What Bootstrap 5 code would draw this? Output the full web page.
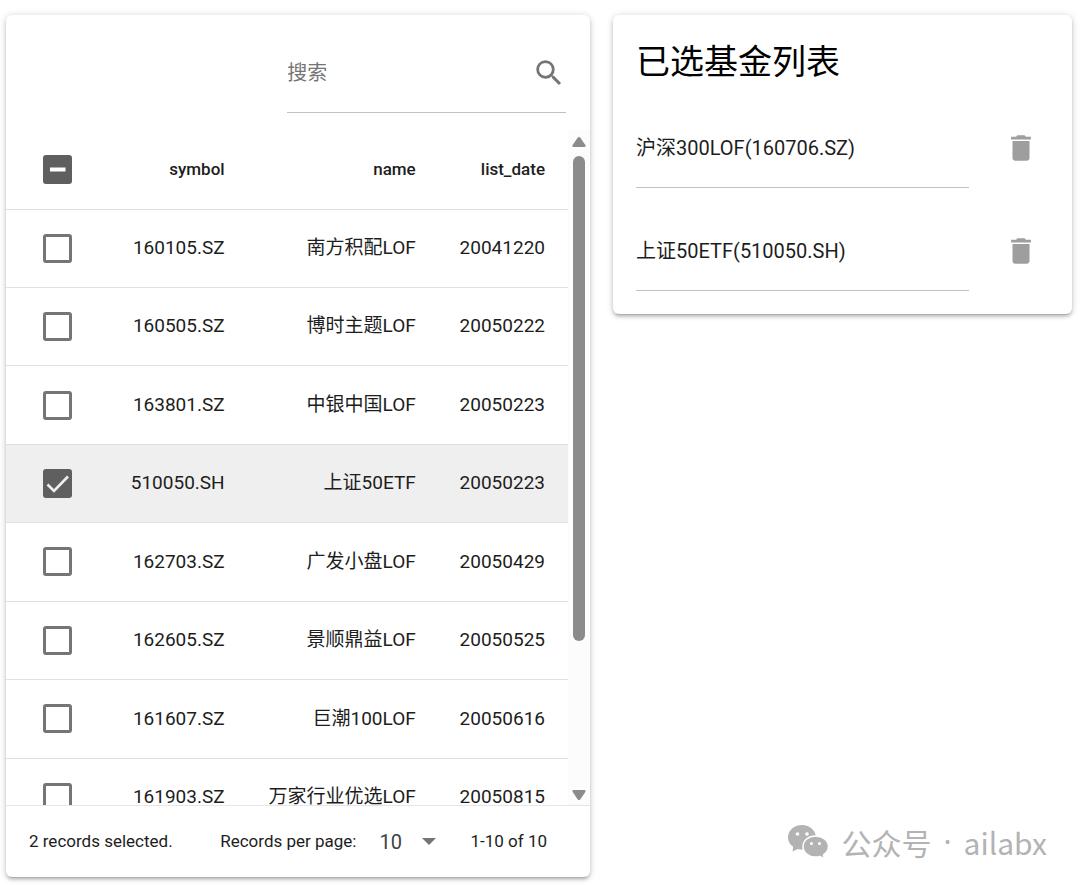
<!DOCTYPE html>
<html lang="zh-CN">
<head>
<meta charset="utf-8">
<meta name="viewport" content="width=device-width, initial-scale=1">
<title>已选基金列表</title>
<link href="https://cdn.jsdelivr.net/npm/bootstrap@5.3.0/dist/css/bootstrap.min.css" rel="stylesheet">
<style>
  body { font-family: Roboto, "Noto Sans CJK SC", sans-serif; color: #1d1d1d; background: #fff; font-size: 17px; }
  .page-grid { display: grid; grid-template-columns: 584fr 459fr; gap: 23px; padding: 15px 8px 8px 6px; }
  .panel { border: 0; border-radius: 6px; box-shadow: 0 1px 7px rgba(0,0,0,.2), 0 3px 3px rgba(0,0,0,.14), 0 4px 1px -3px rgba(0,0,0,.12); }
  .line-field { height: 80px; border-bottom: 1px solid #c2c2c2; }
  .line-field input { font-size: 20px; color: #1d1d1d; line-height: 30px; }
  .line-field input::placeholder { color: #757575; opacity: 1; }
  .search-row { padding: 18px 24px 17px; }
  .search-box { width: 52%; }
  .search-box svg, .trash-btn svg { width: 34px; height: 34px; fill: #757575; }
  .table-view { height: 675px; }
  .fund-table { height: 707px; table-layout: fixed; font-size: 19px; --bs-table-color: #1d1d1d; --bs-table-bg: transparent; }
  .fund-table > * > tr > * { padding: 0 23px 0 0; border-bottom: 1px solid #e0e0e0; text-align: right; vertical-align: middle; white-space: nowrap; }
  .fund-table th { height: 79px; font-size: 17px; font-weight: 500; }
  .fund-table > * > tr > :first-child { padding-left: 37px; text-align: left; }
  .fund-table tr.picked > * { background: #efefef; }
  .col-pick { width: 18%; } .col-symbol { width: 25%; } .col-name { width: 34%; } .col-date { width: 23%; }
  .fund-table .form-check-input { width: 29px; height: 29px; margin: 0; border: 3px solid #757575; border-radius: 3px; display: block; background-color: #fff; }
  .fund-table .form-check-input:checked, .fund-table .form-check-input:indeterminate { background-color: #5f5f5f; border-color: #5f5f5f; background-origin: border-box; background-size: 100% 100%; }
  .fund-table .form-check-input:checked { --bs-form-check-bg-image: url("data:image/svg+xml,%3csvg xmlns='http://www.w3.org/2000/svg' viewBox='0 0 29 29'%3e%3cpath fill='none' stroke='%23efefef' stroke-width='2.6' d='M4.5 15.5L11 22L25 7.5'/%3e%3c/svg%3e"); }
  .fund-table .form-check-input:indeterminate { --bs-form-check-bg-image: url("data:image/svg+xml,%3csvg xmlns='http://www.w3.org/2000/svg' viewBox='0 0 29 29'%3e%3cpath fill='%23fff' d='M7 12.5h15.500v4H7z'/%3e%3c/svg%3e"); }
  .track { width: 22px; background: #fcfcfc; padding: 6px 0 4px; }
  .track svg { width: 14px; height: 12px; fill: #8b8b8b; }
  .thumb { width: 12px; height: 73%; margin-top: 8px; border-radius: 6px; background: #8b8b8b; }
  .table-foot { height: 72px; padding: 0 43px 0 23px; border-top: 1px solid #e6e6e6; color: #1d1d1d; }
  .paging { gap: 34px; }
  .per-page { appearance: none; border: 0; background: transparent; font-size: 20px; color: #424242; width: 57px; padding: 0; }
  .per-page-box svg { width: 14px; height: 7px; fill: #757575; right: 0; pointer-events: none; }
  .picked-panel { padding: 23px; }
  .picked-panel h1 { font-size: 34px; line-height: 48px; font-weight: 400; color: #000; margin-bottom: 22px; }
  .stack-gap { gap: 23px; }
  .trash-btn { width: 57px; padding: 0; border: 0; }
  .trash-btn svg { fill: #9e9e9e; }
  .brand { font: 400 30px/44px "Noto Sans CJK SC", sans-serif; color: #b3b3b3; padding: 0 25px 13px 0; gap: 12px; }
  .brand svg { width: 42px; height: 36px; }
  .brand-dot { font-family: "Noto Sans", sans-serif; }
</style>
</head>
<body>
<main class="page-grid">
  <section class="card panel">
    <div class="search-row d-flex justify-content-end">
      <div class="search-box line-field d-flex align-items-center">
        <input type="search" id="q" class="form-control-plaintext flex-fill p-0" placeholder="搜索" aria-label="搜索">
        <label for="q" class="d-flex"><svg viewBox="0 0 24 24" aria-hidden="true"><path d="M15.500 14h-.79l-.28-.27A6.471 6.471 0 0 0 16 9.500 6.500 6.500 0 1 0 9.500 16c1.610 0 3.090-.59 4.230-1.570l.27.28v.79l5 4.990L20.490 19l-4.990-5zm-6 0C7.010 14 5 11.990 5 9.500S7.010 5 9.500 5 14 7.010 14 9.500 11.990 14 9.500 14z"/></svg></label>
      </div>
    </div>
    <div class="table-view d-flex">
      <div class="flex-fill overflow-hidden">
        <table class="table fund-table mb-0">
          <colgroup><col class="col-pick"><col class="col-symbol"><col class="col-name"><col class="col-date"></colgroup>
          <thead><tr><th><input class="form-check-input" type="checkbox" id="all" aria-label="全选"></th><th>symbol</th><th>name</th><th>list_date</th></tr></thead>
          <tbody>
            <tr><td><input class="form-check-input" type="checkbox" aria-label="160105.SZ"></td><td>160105.SZ</td><td>南方积配LOF</td><td>20041220</td></tr>
            <tr><td><input class="form-check-input" type="checkbox" aria-label="160505.SZ"></td><td>160505.SZ</td><td>博时主题LOF</td><td>20050222</td></tr>
            <tr><td><input class="form-check-input" type="checkbox" aria-label="163801.SZ"></td><td>163801.SZ</td><td>中银中国LOF</td><td>20050223</td></tr>
            <tr class="picked"><td><input class="form-check-input" type="checkbox" checked aria-label="510050.SH"></td><td>510050.SH</td><td>上证50ETF</td><td>20050223</td></tr>
            <tr><td><input class="form-check-input" type="checkbox" aria-label="162703.SZ"></td><td>162703.SZ</td><td>广发小盘LOF</td><td>20050429</td></tr>
            <tr><td><input class="form-check-input" type="checkbox" aria-label="162605.SZ"></td><td>162605.SZ</td><td>景顺鼎益LOF</td><td>20050525</td></tr>
            <tr><td><input class="form-check-input" type="checkbox" aria-label="161607.SZ"></td><td>161607.SZ</td><td>巨潮100LOF</td><td>20050616</td></tr>
            <tr><td><input class="form-check-input" type="checkbox" aria-label="161903.SZ"></td><td>161903.SZ</td><td>万家行业优选LOF</td><td>20050815</td></tr>
          </tbody>
        </table>
      </div>
      <div class="track d-flex flex-column align-items-center flex-shrink-0" aria-hidden="true">
        <svg viewBox="0 0 14 12"><path d="M5.800 1.500Q7 .3 8.200 1.500L13.500 9.300Q14 11 12.500 11H1.500Q0 11 .5 9.300z"/></svg>
        <div class="thumb"></div>
        <svg class="mt-auto" viewBox="0 0 14 12"><path d="M5.800 10.500Q7 11.700 8.200 10.500L13.500 2.700Q14 1 12.500 1H1.500Q0 1 .5 2.700z"/></svg>
      </div>
    </div>
    <div class="table-foot d-flex align-items-center justify-content-between">
      <span>2 records selected.</span>
      <div class="paging d-flex align-items-center">
        <div class="d-flex align-items-center stack-gap">
          <label for="rows">Records per page:</label>
          <div class="per-page-box position-relative d-flex align-items-center">
            <select id="rows" class="per-page"><option>10</option></select>
            <svg class="position-absolute" viewBox="0 0 14 7" aria-hidden="true"><path d="M0 0h14L7 7z"/></svg>
          </div>
        </div>
        <span>1-10 of 10</span>
      </div>
    </div>
  </section>

  <div class="d-flex flex-column justify-content-between">
    <section class="card panel picked-panel">
      <h1>已选基金列表</h1>
      <div class="d-flex flex-column stack-gap">
        <div class="d-flex stack-gap">
          <div class="line-field d-flex align-items-center flex-fill"><input type="text" class="form-control-plaintext p-0" value="沪深300LOF(160706.SZ)" aria-label="基金 1"></div>
          <button type="button" class="btn trash-btn" aria-label="删除"><svg viewBox="0 0 24 24"><path d="M6 19c0 1.100.9 2 2 2h8c1.100 0 2-.9 2-2V7H6v12zM19 4h-3.500l-1-1h-5l-1 1H5v2h14V4z"/></svg></button>
        </div>
        <div class="d-flex stack-gap">
          <div class="line-field d-flex align-items-center flex-fill"><input type="text" class="form-control-plaintext p-0" value="上证50ETF(510050.SH)" aria-label="基金 2"></div>
          <button type="button" class="btn trash-btn" aria-label="删除"><svg viewBox="0 0 24 24"><path d="M6 19c0 1.100.9 2 2 2h8c1.100 0 2-.9 2-2V7H6v12zM19 4h-3.500l-1-1h-5l-1 1H5v2h14V4z"/></svg></button>
        </div>
      </div>
    </section>
    <div class="brand d-flex align-items-center justify-content-end">
      <svg viewBox="0 0 42 36" aria-hidden="true">
        <path fill="#b3b3b3" d="M15 1C7 1 1 6.500 1 13.500c0 4 2 7 5.200 9.300L5.500 27.500l5.300-2.600c1.300.4 2.800.6 4.200.6 8 0 14-5.400 14-12S23 1 15 1z"/>
        <path fill="#b3b3b3" stroke="#fff" stroke-width="1.500" d="M28.500 12C21.500 12 16 16.600 16 22.500S21.500 33 28.500 33c1.500 0 3-.2 4.300-.6l4.700 2.400-1-4c3-2 5-5 5-8.300C41.500 16.600 35.500 12 28.500 12z"/>
        <g fill="#fff"><circle cx="10.500" cy="10" r="1.800"/><circle cx="20" cy="10" r="1.800"/><circle cx="24.500" cy="19.500" r="1.500"/><circle cx="32.500" cy="19.500" r="1.500"/></g>
      </svg>
      <span>公众号</span>
      <span class="brand-dot">·</span>
      <span>ailabx</span>
    </div>
  </div>
</main>
<script src="https://cdn.jsdelivr.net/npm/bootstrap@5.3.0/dist/js/bootstrap.bundle.min.js"></script>
<script>document.getElementById('all').indeterminate = true;</script>
</body>
</html>
